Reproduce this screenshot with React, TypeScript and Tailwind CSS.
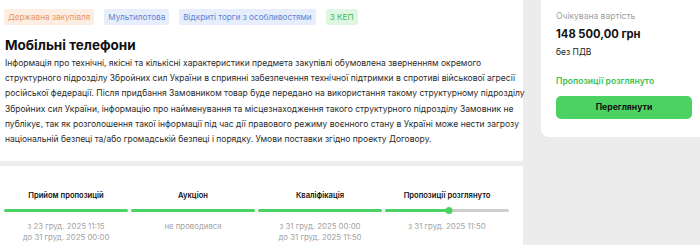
import React from "react";

const font = { fontFamily: "Inter, 'Noto Sans', sans-serif" };

function Tag({ children, cls }: { children: React.ReactNode; cls: string }) {
  return (
    <span className={`inline-flex items-center h-[16px] px-[4px] rounded-[2px] text-[8.2px] leading-none whitespace-nowrap ${cls}`}>
      {children}
    </span>
  );
}

function Stage({
  title,
  lines,
  progress,
}: {
  title: string;
  lines: string[];
  progress?: boolean;
}) {
  return (
    <div className="flex flex-col items-center">
      <div className="h-[14px] flex items-center text-[7.6px] font-semibold text-[#111] whitespace-nowrap">{title}</div>
      <div className="w-full mt-[4px] h-[7px] flex items-center relative">
        {progress ? (
          <>
            <div className="h-[3px] w-[52%] bg-[#4cd263] rounded-l-full" />
            <div className="h-[3px] flex-1 bg-[#cfcfcf] rounded-r-full" />
            <div className="absolute left-[52%] -translate-x-1/2 w-[7px] h-[7px] rounded-full bg-[#4cd263]" />
          </>
        ) : (
          <div className="h-[3px] w-full bg-[#4cd263] rounded-full" />
        )}
      </div>
      <div className="mt-[7px] flex flex-col items-center text-[7.8px] leading-[11px] text-[#a3a3a3] whitespace-nowrap">
        {lines.map((l) => (
          <div key={l}>{l}</div>
        ))}
      </div>
    </div>
  );
}

const para = [
  "Інформація про технічні, якісні та кількісні характеристики предмета закупівлі обумовлена зверненням окремого",
  "структурного підрозділу Збройних сил України в сприянні забезпечення технічної підтримки в спротиві військової агресії",
  "російської федерації. Після придбання Замовником товар буде передано на використання такому структурному підрозділу",
  "Збройних сил України, інформацію про найменування та місцезнаходження такого структурного підрозділу Замовник не",
  "публікує, так як розголошення такої інформації під час дії правового режиму воєнного стану в Україні може нести загрозу",
  "національній безпеці та/або громадській безпеці і порядку. Умови поставки згідно проекту Договору.",
];

export default function App() {
  return (
    <div className="w-[700px] h-[245px] bg-[#ececec] flex overflow-hidden" style={font}>
      <div className="w-[523px] flex flex-col">
        <div className="h-[161px] bg-white px-[5px] pt-[9px]">
          <div className="flex items-center gap-[10px]">
            <Tag cls="bg-[#fdeee4] text-[#e99561] -ml-[1px]">Державна закупівля</Tag>
            <Tag cls="bg-[#e7eefb] text-[#5f83d4]">Мультилотова</Tag>
            <Tag cls="bg-[#e7eefb] text-[#5f83d4]">Відкриті торги з особливостями</Tag>
            <Tag cls="bg-[#dff6e3] text-[#3dbb55]">З КЕП</Tag>
          </div>
          <div className="mt-[12px] text-[13.5px] font-bold text-[#111] leading-[16px]">Мобільні телефони</div>
          <div className="mt-[3px] text-[8.5px] leading-[15.2px] text-[#2a2a2a]">
            {para.map((l) => (
              <div key={l} className="whitespace-nowrap">{l}</div>
            ))}
          </div>
        </div>
        <div className="mt-[5px] flex-1 bg-white pl-[4px] pt-[23px] pr-[14px]">
          <div className="grid grid-cols-4 gap-[3px]">
            <Stage title="Прийом пропозицій" lines={["з 23 груд. 2025 11:15", "до 31 груд. 2025 00:00"]} />
            <Stage title="Аукціон" lines={["не проводився"]} />
            <Stage title="Кваліфікація" lines={["з 31 груд. 2025 00:00", "до 31 груд. 2025 11:50"]} />
            <Stage title="Пропозиції розглянуто" lines={["з 31 груд. 2025 11:50"]} progress />
          </div>
        </div>
      </div>
      <div className="ml-[18px] w-[159px] h-[137px] bg-white rounded-bl-[8px] pl-[15px] pr-[7px] pt-[9px] flex flex-col">
        <div className="text-[8.5px] leading-[14px] text-[#a0a0a0]">Очікувана вартість</div>
        <div className="mt-[3px] text-[11.2px] leading-[16px] font-bold text-[#111]">148 500,00 грн</div>
        <div className="mt-[3px] text-[8.5px] leading-[14px] text-[#222]">без ПДВ</div>
        <div className="mt-[15px] text-[8.6px] leading-[14px] font-semibold text-[#3cbf55]">Пропозиції розглянуто</div>
        <button className="mt-[8px] h-[23px] w-[136px] rounded-[5px] bg-[#4cd263] text-[8.6px] font-bold text-[#111]">
          Переглянути
        </button>
      </div>
    </div>
  );
}
